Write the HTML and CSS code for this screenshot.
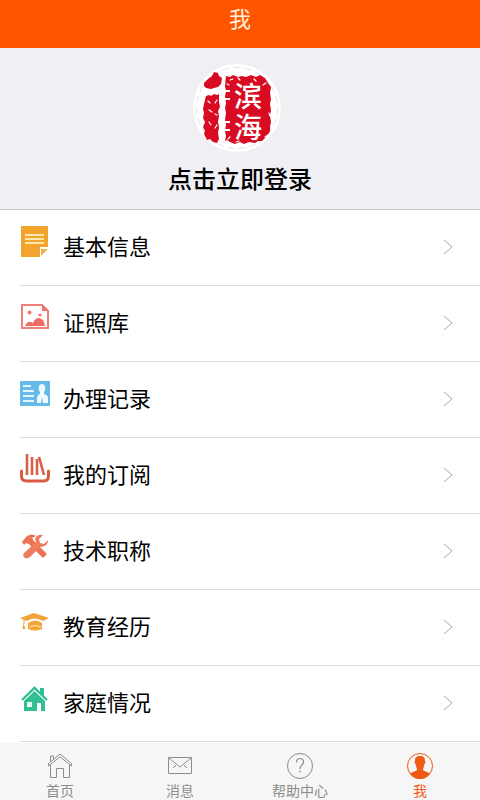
FILE: index.html
```html
<!DOCTYPE html>
<html lang="zh-CN">
<head>
<meta charset="utf-8">
<meta name="viewport" content="width=device-width, initial-scale=1">
<title>我</title>
<link rel="stylesheet" href="styles.css">
</head>
<body>
<header class="topbar"><h1>我</h1></header>

<main>
  <a class="profile" href="#">
    <svg class="avatar" viewBox="0 0 88 88" aria-hidden="true">
      <circle cx="44" cy="44" r="44" fill="#fff"/>
      <circle cx="44" cy="44" r="40.5" fill="none" stroke="#dfe3e6" stroke-dasharray="7 4"/>
      <g fill="#d80b22">
        <path d="M11 19l4-4 4-3 2-4 4 1 1 3 3 2-1 6-3 3-4 1-3 1-5-1-2-2z"/>
        <path d="M13 32l3-1 2 1 3-2 3 1 2-1v8l1 5-2 4 1 5-1 6 1 5-1 6 1 6-2 4-4-1-3-3-3 1-3-6 1-3-2-4 2-5-2-4 1-5-1-4 1-5z"/>
        <path d="M33 12l4 1 3-2 5 2 4-1 4 1 5-2 5 2 4-2 5 3 3 5 3 4-1 6 1 6-1 5 1 6-1 6 1 6-1 5 0 4-3 5-5 5-4 0-3 2-6-1-5 2-4-2-5 2-5-2-3-2-2 1 1-5-1-5 1-6-1-5 1-7-1-5 1-5-1-6 1-6-1-5z"/>
      </g>
      <g fill="none" stroke="#fff" stroke-linecap="round" stroke-width="1.2">
        <path d="M15 37l2 2M24 36l-2 3M16 46l3 2M24 51l-2-1M16 58l2 3M24 61l-2 3M37 16l3-1M45 14l2 2M61 15l2 2M73 19l-3 2M34 20l2 1M76 49l1 3M75 71l-3 2M43 78l3-1M35 75l2-2"/>
      </g>
      <g class="seal-text">
        <text x="41" y="43">滨</text>
        <text x="41" y="74">海</text>
      </g>
      <path d="M32 27h5M32 35h5M32 58h5M32 66h5" fill="none" stroke="#fff" stroke-width="2"/>
    </svg>
    <span class="login">点击立即登录</span>
  </a>

  <ul class="menu">
    <li><a class="row" href="#">
      <svg class="icon" viewBox="0 0 30 32" aria-hidden="true"><path d="M1 0h27v21h-8v10H1z" fill="#f2a42c"/><path d="M21 23h7l-7 7z" fill="#efb34f"/><path d="M5 9h19M5 13h19M5 17h19" stroke="#ffe7ad" stroke-width="2"/></svg>
      <span class="label">基本信息</span>
      <svg class="chevron" viewBox="0 0 10 16" aria-hidden="true"><path d="M1 1l8 7-8 7"/></svg></a></li>
    <li><a class="row" href="#">
      <svg class="icon" viewBox="0 0 30 32" aria-hidden="true"><path d="M2 3h20l6 6v17H2z" fill="none" stroke="#f08078" stroke-width="2"/><path d="M22 2v7h7z" fill="#ee736b"/><path d="M5 24c2-5 5-5 8-3 2-5 6-6 8-4 3 0 3 4 4 7z" fill="#f06b62"/><circle cx="9.500" cy="10.500" r="2" fill="#ef7770"/><circle cx="20" cy="13" r="1.600" fill="#ef7770"/></svg>
      <span class="label">证照库</span>
      <svg class="chevron" viewBox="0 0 10 16" aria-hidden="true"><path d="M1 1l8 7-8 7"/></svg></a></li>
    <li><a class="row" href="#">
      <svg class="icon" viewBox="0 0 30 32" aria-hidden="true"><path d="M0 3h30v25H0z" fill="#67b9e8"/><path d="M3 8h8M3 13h11M3 18h11M3 23h11" stroke="#e4f6ff" stroke-width="2.200"/><path d="M22 6c4 0 4 6 2 8v2c3 1 4 2 4 5v4H17v-4c0-3 1-4 3-5v-2c-2-2-2-8 2-8z" fill="#eefaff"/><path d="M22 19l1 6h-2z" fill="#67b9e8"/></svg>
      <span class="label">办理记录</span>
      <svg class="chevron" viewBox="0 0 10 16" aria-hidden="true"><path d="M1 1l8 7-8 7"/></svg></a></li>
    <li><a class="row" href="#">
      <svg class="icon" viewBox="0 0 30 32" aria-hidden="true"><path d="M1.500 17v5q0 5 5 5h17q5 0 5-5v-5" fill="none" stroke="#d95b42" stroke-width="3" stroke-linecap="round"/><path d="M7 0v21M12 3v18M17 5v16M19 3l5 18" fill="none" stroke="#d96049" stroke-width="2.600"/></svg>
      <span class="label">我的订阅</span>
      <svg class="chevron" viewBox="0 0 10 16" aria-hidden="true"><path d="M1 1l8 7-8 7"/></svg></a></li>
    <li><a class="row" href="#">
      <svg class="icon" viewBox="0 0 30 32" aria-hidden="true"><path d="M2 12l5-6q5-3 9 0l-4 2 2 3 13 13-4 4-14-14-3-1-2 2z" fill="#ec7255"/><path d="M28 10l-4 4-4-1-1-4 4-4q-6-1-8 4l1 3L4 23q-2 3 1 5 3 1 5-1l10-10q8 0 8-7z" fill="#f07c60"/></svg>
      <span class="label">技术职称</span>
      <svg class="chevron" viewBox="0 0 10 16" aria-hidden="true"><path d="M1 1l8 7-8 7"/></svg></a></li>
    <li><a class="row" href="#">
      <svg class="icon" viewBox="0 0 30 32" aria-hidden="true"><path d="M0 12L14 7l15 5-6 3q-9-5-16 0z" fill="#efa435"/><path d="M8 17q7-5 14 0v6q-7 3-14 0z" fill="#f0a63b"/><path d="M9 21q6-3 12 0" fill="none" stroke="#ffe6b7"/><path d="M4 13v5" stroke="#efa435"/><path d="M3.500 17l2 6h-3z" fill="#efa435"/></svg>
      <span class="label">教育经历</span>
      <svg class="chevron" viewBox="0 0 10 16" aria-hidden="true"><path d="M1 1l8 7-8 7"/></svg></a></li>
    <li><a class="row" href="#">
      <svg class="icon" viewBox="0 0 30 32" aria-hidden="true"><path d="M2 18L14.500 6 27 18" fill="none" stroke="#2dbd91" stroke-width="2.400"/><path d="M20 6h4v8l-4-4z" fill="#2dbd91"/><path d="M4 19L14.500 9 25 19v10h-4v-8h-4v8H4z" fill="#32be93"/><path d="M7 20h5v5H7z" fill="#e9fff7"/></svg>
      <span class="label">家庭情况</span>
      <svg class="chevron" viewBox="0 0 10 16" aria-hidden="true"><path d="M1 1l8 7-8 7"/></svg></a></li>
  </ul>
</main>

<nav class="tabs">
  <a class="tab" href="#">
    <svg viewBox="0 0 28 28" aria-hidden="true"><path d="M2.500 14v-2.500L14 2l11.500 9.500V14L14 4.800zM4.500 12.500V25.500h6v-9h7v9h6V12.500M4.500 9.500V4h3v3" fill="none" stroke="currentColor"/></svg>
    <span>首页</span></a>
  <a class="tab" href="#">
    <svg viewBox="0 0 28 28" aria-hidden="true"><path d="M2.500 5.500h23v16h-23zM3 6l11 9L25 6M7 16l3-3M21 16l-3-3" fill="none" stroke="currentColor"/></svg>
    <span>消息</span></a>
  <a class="tab" href="#">
    <svg viewBox="0 0 28 28" aria-hidden="true"><circle cx="14" cy="14" r="12.500" fill="none" stroke="currentColor"/><path d="M10.500 10.500q0-4 3.500-4t3.500 3.500q0 2-2 3.500-1.500 1-1.500 3.500M14 18.500v2" fill="none" stroke="currentColor" stroke-width="1.200"/></svg>
    <span>帮助中心</span></a>
  <a class="tab active" href="#" aria-current="page">
    <svg viewBox="0 0 28 28" aria-hidden="true"><circle cx="14" cy="14" r="12.500" fill="none" stroke="currentColor"/><path d="M14 4c4 0 5 2 5 5 1 1 0 3-1 4q0 2-1 4c0 3 5 2 7 5q-4 5-10 5T4 22c2-3 7-2 7-5q-1-2-1-4c-1-1-2-3-1-4 0-3 1-5 5-5z" fill="currentColor"/></svg>
    <span>我</span></a>
</nav>
</body>
</html>
```
FILE: styles.css
```css
* {
  box-sizing: border-box;
}

body {
  margin: 0;
  min-height: 100vh;
  display: flex;
  flex-direction: column;
  background: #fff;
  color: #000;
  font-family: "Noto Sans CJK SC", sans-serif;
}

a {
  color: inherit;
  text-decoration: none;
}

svg {
  display: block;
  flex: none;
}

.topbar {
  height: 48px;
  padding-bottom: 14px;
  display: flex;
  align-items: center;
  justify-content: center;
  background: #ff5400;
  color: #fff0dc;
}

.topbar h1 {
  margin: 0;
  font-size: 22px;
  font-weight: 400;
  line-height: 32px;
}

.profile {
  display: flex;
  flex-direction: column;
  align-items: center;
  gap: 8px;
  padding: 16px 0 13px;
  background: #efeff4;
  border-bottom: 1px solid #c8c8cc;
}

.avatar {
  width: 88px;
  height: 88px;
  margin-right: 6px;
}

.seal-text {
  fill: #fff;
  font-size: 28px;
  font-weight: 500;
}

.login {
  font-size: 24px;
  font-weight: 500;
  line-height: 36px;
}

.menu {
  list-style: none;
  margin: 0;
  padding: 0 0 0 20px;
}

.row {
  display: flex;
  align-items: center;
  height: 76px;
  padding-right: 27px;
  border-bottom: 1px solid #dcdcdc;
}

.icon {
  width: 30px;
  height: 32px;
  margin: 0 13px 12px 0;
}

.label {
  flex: 1;
  padding-bottom: 5px;
  font-size: 22px;
  line-height: 32px;
}

.chevron {
  width: 10px;
  height: 16px;
  margin-bottom: 2px;
  fill: none;
  stroke: #a8a8ac;
}

.tabs {
  position: sticky;
  bottom: 0;
  margin-top: auto;
  height: 57px;
  display: grid;
  grid-template-columns: repeat(4, 1fr);
  background: #f6f6f6;
  color: #8c8c8c;
}

.tab {
  display: flex;
  flex-direction: column;
  align-items: center;
  padding-top: 9px;
}

.tab svg {
  width: 28px;
  height: 28px;
}

.tab span {
  font-size: 14px;
  line-height: 20px;
}

.tab.active {
  color: #f05a14;
}
```
